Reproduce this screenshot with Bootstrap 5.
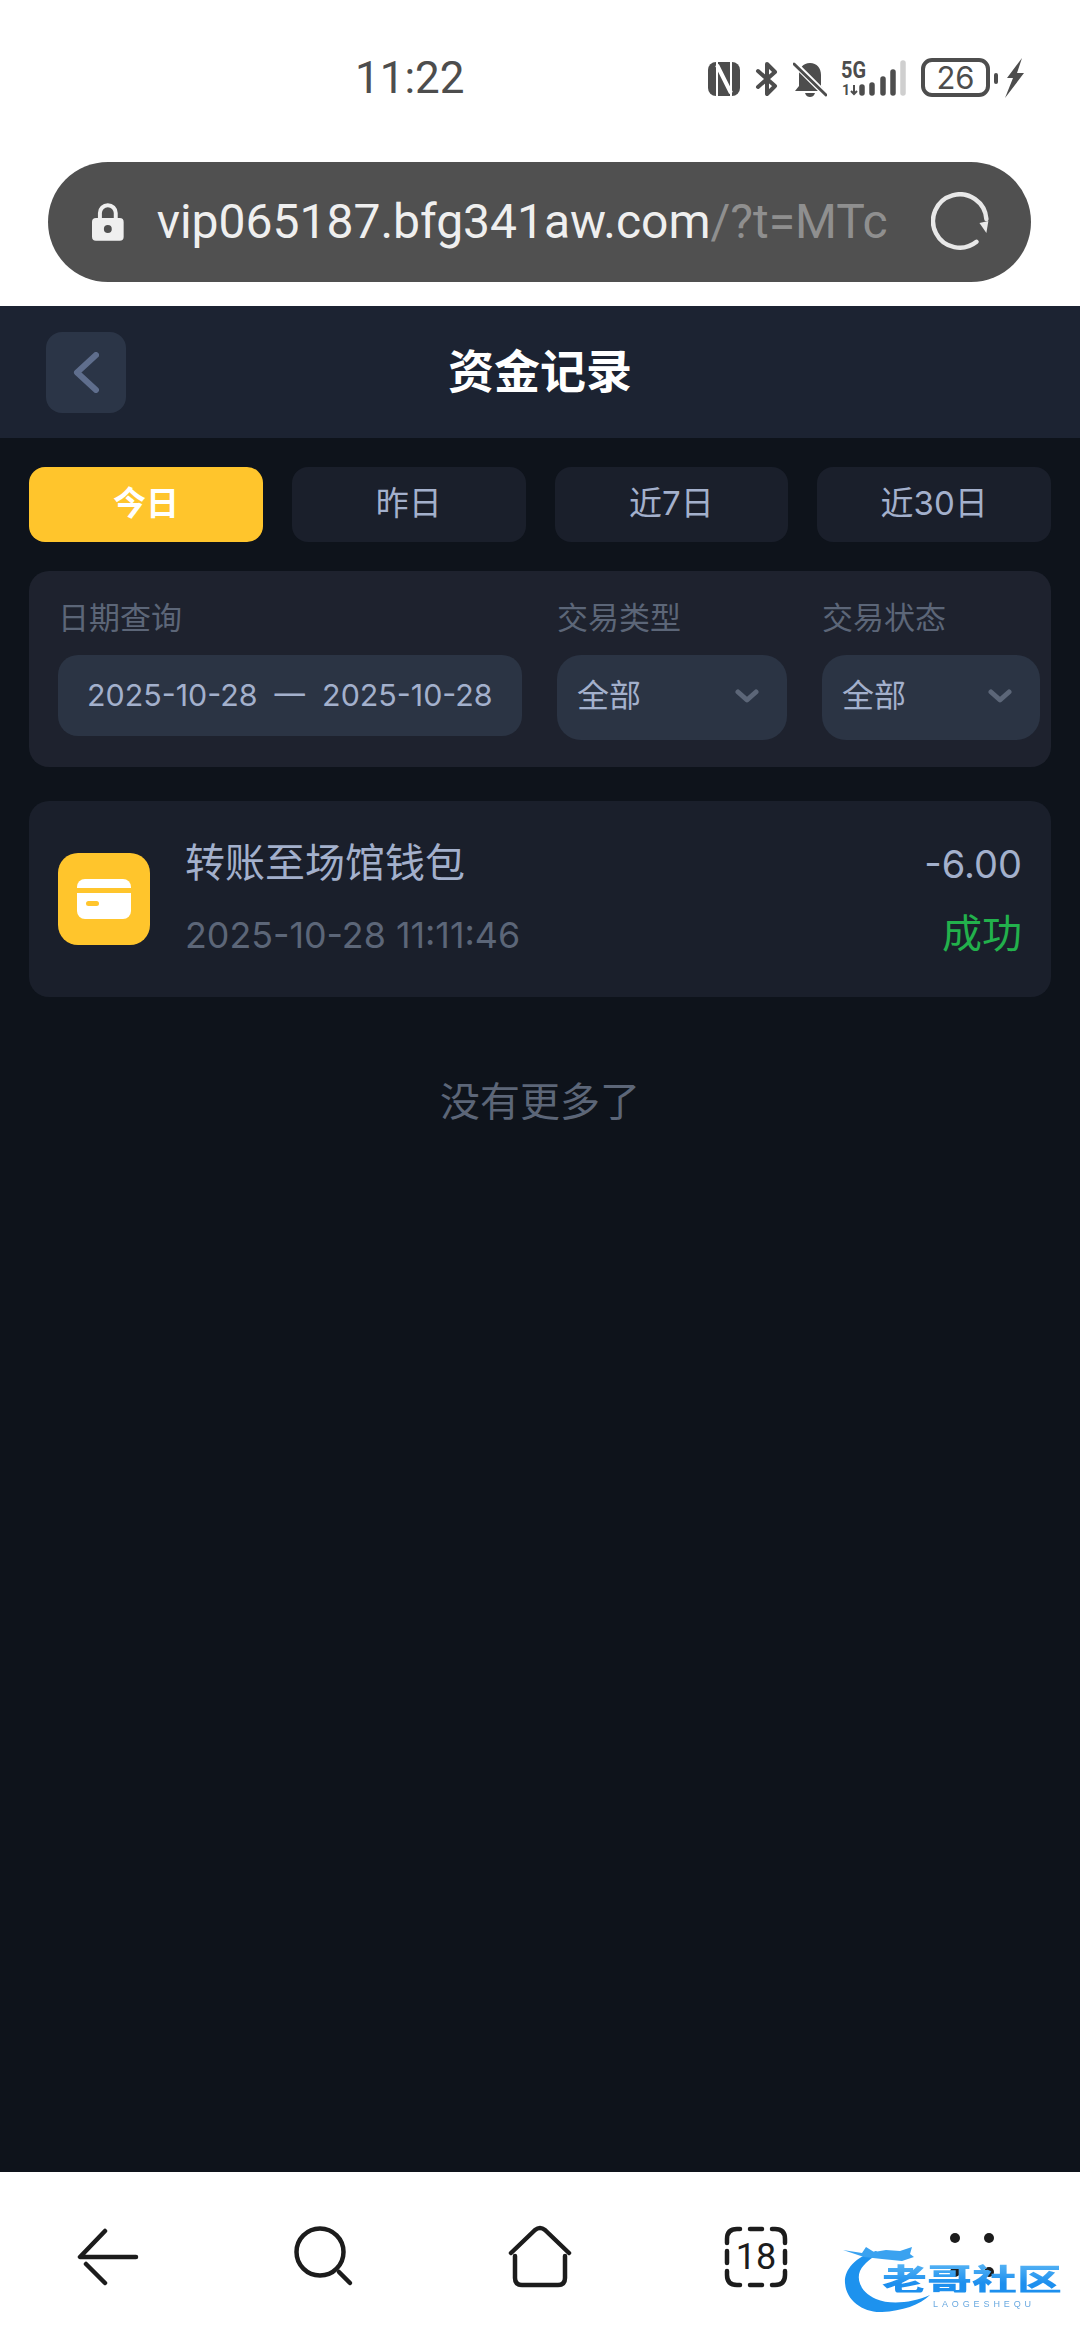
<!DOCTYPE html>
<html lang="zh">
<head>
  <meta charset="UTF-8">
  <title>资金记录</title>
  <link href="https://cdn.jsdelivr.net/npm/bootstrap@5.3.0/dist/css/bootstrap.min.css" rel="stylesheet">
  <style>
    html, body { margin: 0; height: 100%; overflow: hidden; }
    body {
      font-family: "Inter", "Noto Sans CJK SC", sans-serif;
      background-color: #fff;
      color: #a3b0cc;
      height: 100vh;
    }

    /* Phone status bar */
    .status-row { height: 162px; padding: 58px 56px 0 355px; color: #4d4d4d; flex: none; }
    .clock { font-size: 44px; line-height: 40px; width: 352px; font-family: "Roboto", sans-serif; }
    .status-batt { width: 69px; height: 39px; border: 4px solid #4d4d4d; border-radius: 11px; font-size: 31px; line-height: 31px; text-align: center; }

    /* Browser address bar */
    .addr-wrap { height: 144px; padding: 0 49px 24px 48px; flex: none; }
    .addr-bar { height: 120px; border-radius: 60px; background-color: #505050; padding: 0 41px 0 44px; }
    .addr-text { width: 731px; margin-left: 33px; margin-right: 43px; font-size: 48px; line-height: 60px; color: #efefef; white-space: nowrap; font-family: "Roboto", sans-serif; }
    .addr-text span { color: #8f8f8f; }

    /* App */
    .app-main { background-color: #0e131b; flex: 1 1 auto; min-height: 0; }
    .app-head { height: 132px; background-color: #1c2332; padding: 0 46px; position: relative; }
    .app-back { width: 80px; height: 81px; background-color: #2b3547; border-radius: 16px; }
    .app-title { color: #fff; font-size: 46px; font-weight: 700; flex: 1; text-align: center; margin: 0 80px 3px 0; line-height: 60px; }

    .range-row { padding: 29px 29px 0; gap: 29px; }
    .range-tab { flex: 1 1 0; height: 75px; border-radius: 16px; background-color: #1a1f2b; font-size: 33px; line-height: 73px; text-align: center; color: #a3b0cc; }
    .range-tab.is-on { background-color: #ffc52c; color: #fff; font-weight: 700; }

    .filter-box { margin: 29px 29px 0; height: 196px; background-color: #1e222e; border-radius: 20px; padding: 29px 11px 0 29px; gap: 35px; }
    .filter-label { font-size: 31px; line-height: 36px; color: #5c6678; margin: 0 0 19px 0; }
    .date-box { width: 464px; height: 81px; margin-top: 2px; background-color: #2b3444; border-radius: 20px; font-size: 30.400px; line-height: 81px; padding-left: 29px; white-space: nowrap; }
    .pick-box { height: 85px; background-color: #2b3444; border-radius: 24px; font-size: 32px; padding: 0 28px 3px 20px; }

    .rec-card { margin: 34px 29px 0; height: 196px; background-color: #1a1f2b; border-radius: 20px; padding: 0 29px 0 29px; }
    .rec-icon { width: 92px; height: 92px; border-radius: 20px; background-color: #ffc52c; flex: none; margin-right: 35px; }
    .rec-name { font-size: 40px; line-height: 50px; margin-bottom: 22px; }
    .rec-time { font-size: 35.800px; line-height: 50px; color: #5c6678; }
    .rec-ok { font-size: 40px; line-height: 50px; margin-top: 20px; color: #22b14c; }
    .rec-amt { font-size: 38px; line-height: 50px; }
    .no-more { font-size: 40px; line-height: 50px; color: #5c6678; text-align: center; margin-top: 80px; }

    /* Browser bottom bar */
    .tool-row { height: 168px; flex: none; position: relative; background-color: #fff; }
    .tool-ico { position: absolute; top: 50px; }
    .tab-count { position: absolute; left: 725px; top: 55px; width: 62px; height: 60px; line-height: 60px; text-align: center; font-size: 36px; color: #1c1c1c; font-family: "Roboto", sans-serif; }

    /* Watermark over the toolbar */
    .wm-mark { position: absolute; left: 842px; top: 73px; width: 222px; height: 70px; filter: blur(0.7px); }
    .wm-art { position: absolute; left: 0; top: 0; }
    .wm-name {
      position: absolute; left: 40px; top: 17px;
      font-family: "Noto Sans CJK SC", sans-serif; font-weight: 900; font-size: 45px; line-height: 45px;
      white-space: nowrap; transform: scaleY(0.68); transform-origin: top left;
      background: linear-gradient(#5ab6f5, #1d8fee 70%);
      -webkit-background-clip: text; background-clip: text; color: transparent;
    }
    .wm-sub { position: absolute; left: 91px; top: 54px; font-size: 9px; letter-spacing: 3.900px; line-height: 10px; color: #6aa9e0; white-space: nowrap; font-family: "Liberation Sans", sans-serif; }
  </style>
</head>
<body class="d-flex flex-column">
  <!-- status bar -->
  <div class="status-row d-flex align-items-start">
    <div class="clock">11:22</div>
    <div class="d-flex align-items-start">
      <svg width="34" height="36" viewBox="0 0 34 36" style="margin-top:3px;margin-right:14px"><rect x="1" y="1" width="32" height="34" rx="8" fill="#4d4d4d"/><path d="M10 1v34M24 1v34" stroke="#fff" stroke-width="2"/><path d="M10 4l14 28" stroke="#fff" stroke-width="4"/></svg>
      <svg width="24" height="38" viewBox="0 0 24 38" style="margin-top:2px;margin-right:14px"><path d="M3 11l17 15-8 8V4l8 8L3 27" fill="none" stroke="#4d4d4d" stroke-width="4" stroke-linejoin="round" stroke-linecap="round"/></svg>
      <svg width="34" height="38" viewBox="0 0 34 38" style="margin-top:2px;margin-right:13px"><path d="M17 3c7 0 11 5 11 12v11l4 5H2l4-5V15C6 8 10 3 17 3zM12 33h10c-1 3-3 4-5 4s-4-1-5-4z" fill="#4d4d4d"/><path d="M2 4l30 30" stroke="#fff" stroke-width="6"/><path d="M1 4l32 31" stroke="#4d4d4d" stroke-width="3" stroke-linecap="round"/></svg>
      <svg width="68" height="43" viewBox="0 -3 68 43" style="margin-right:13px;margin-top:-2px">
        <text x="1" y="19" font-family="Roboto, sans-serif" font-weight="700" font-size="23" textLength="25" lengthAdjust="spacingAndGlyphs" fill="#4d4d4d">5G</text>
        <text x="2" y="36" font-family="Roboto, sans-serif" font-weight="700" font-size="14" fill="#4d4d4d">1</text>
        <path d="M14 26v9m-3-3l3 3 3-3" fill="none" stroke="#4d4d4d" stroke-width="2"/>
        <g stroke-linecap="round" stroke-width="5.500" fill="none">
          <path d="M22 28v6M32 26v8M43 20v14M53 13v21" stroke="#4d4d4d"/>
          <path d="M63 4v30" stroke="#cfcfcf"/>
        </g>
      </svg>
      <div class="status-batt">26</div>
      <svg width="34" height="40" viewBox="0 0 34 40"><rect x="4" y="15" width="4" height="11" rx="2" fill="#4d4d4d"/><path d="M32 0L17 20h6l-8 20 19-25h-7z" fill="#4d4d4d"/></svg>
    </div>
  </div>

  <!-- address bar -->
  <div class="addr-wrap">
    <div class="addr-bar d-flex align-items-center">
      <svg width="32" height="38" viewBox="0 0 32 38"><path d="M8 16V10a8 8 0 0 1 16 0v6" fill="none" stroke="#efefef" stroke-width="4"/><rect y="15" width="32" height="23" rx="4" fill="#efefef"/><circle cx="16" cy="26" r="4" fill="#505050"/></svg>
      <div class="addr-text">vip065187.bfg341aw.com<span>/?t=MTc</span></div>
      <svg width="60" height="60" viewBox="0 0 60 60"><path d="M46 50A27 27 0 1 1 56 27" fill="none" stroke="#e8e8e8" stroke-width="4.500" stroke-linecap="round"/><path d="M49 31l9-2-2 12z" fill="#e8e8e8"/></svg>
    </div>
  </div>

  <!-- app -->
  <div class="app-main">
    <div class="app-head d-flex align-items-center">
      <div class="app-back d-flex align-items-center justify-content-center">
        <svg width="26" height="41" viewBox="0 0 26 41"><path d="M23 3L4 20.500 23 38" fill="none" stroke="#5f6e8d" stroke-width="6" stroke-linecap="round" stroke-linejoin="round"/></svg>
      </div>
      <div class="app-title">资金记录</div>
    </div>

    <div class="range-row d-flex">
      <div class="range-tab is-on">今日</div>
      <div class="range-tab">昨日</div>
      <div class="range-tab">近7日</div>
      <div class="range-tab">近30日</div>
    </div>

    <div class="filter-box d-flex">
      <div>
        <div class="filter-label">日期查询</div>
        <div class="date-box">2025-10-28 &nbsp;—&nbsp; 2025-10-28</div>
      </div>
      <div style="width:230px">
        <div class="filter-label">交易类型</div>
        <div class="pick-box d-flex align-items-center justify-content-between">全部
          <svg width="24" height="14" viewBox="0 0 24 14"><path d="M3 3l9 8 9-8" fill="none" stroke="#5c6678" stroke-width="5" stroke-linecap="round" stroke-linejoin="round"/></svg>
        </div>
      </div>
      <div style="width:218px">
        <div class="filter-label">交易状态</div>
        <div class="pick-box d-flex align-items-center justify-content-between">全部
          <svg width="24" height="14" viewBox="0 0 24 14"><path d="M3 3l9 8 9-8" fill="none" stroke="#5c6678" stroke-width="5" stroke-linecap="round" stroke-linejoin="round"/></svg>
        </div>
      </div>
    </div>

    <div class="rec-card d-flex align-items-center">
      <div class="rec-icon d-flex align-items-center justify-content-center">
        <svg width="54" height="40" viewBox="0 0 54 40"><rect width="54" height="40" rx="8" fill="#fff"/><rect y="9" width="54" height="5" fill="#ffc52c"/><rect x="9" y="22" width="13" height="5" rx="2.500" fill="#ffc52c"/></svg>
      </div>
      <div class="flex-grow-1">
        <div class="rec-name">转账至场馆钱包</div>
        <div class="rec-time">2025-10-28 11:11:46</div>
      </div>
      <div class="text-end">
        <div class="rec-amt">-6.00</div>
        <div class="rec-ok">成功</div>
      </div>
    </div>

    <div class="no-more">没有更多了</div>
  </div>

  <!-- bottom bar -->
  <div class="tool-row">
    <svg class="tool-ico" style="left:74px" width="68" height="64" viewBox="0 0 68 64"><path d="M31 9L6 35h56M12 42l19 19" fill="none" stroke="#1c1c1c" stroke-width="4.500" stroke-linecap="round" stroke-linejoin="round"/></svg>
    <svg class="tool-ico" style="left:290px" width="68" height="68" viewBox="0 0 68 68"><circle cx="30" cy="30" r="23.500" fill="none" stroke="#1c1c1c" stroke-width="4.500"/><path d="M49 50l11 11" stroke="#1c1c1c" stroke-width="4.500" stroke-linecap="round"/></svg>
    <svg class="tool-ico" style="left:505px" width="70" height="70" viewBox="0 0 70 70"><path d="M6 31L30 8q5-4 10 0l24 23M10 34v22q0 7 7 7h36q7 0 7-7V34" fill="none" stroke="#1c1c1c" stroke-width="4.500" stroke-linecap="round" stroke-linejoin="round"/></svg>
    <svg class="tool-ico" style="left:723px;top:53px" width="66" height="64" viewBox="0 0 66 64"><path d="M4 18v-4q0-10 10-10h3M27 4h12M49 4h3q10 0 10 10v4M62 26v12M62 46v4q0 10-10 10h-3M39 60H27M17 60h-3q-10 0-10-10v-4M4 38V26" fill="none" stroke="#1c1c1c" stroke-width="4.500" stroke-linecap="round"/></svg>
    <div class="tab-count">18</div>
    <svg class="tool-ico" style="left:945px;top:56px" width="54" height="54" viewBox="0 0 54 54"><g fill="#1c1c1c"><circle cx="10" cy="10" r="5"/><circle cx="44" cy="10" r="5"/><circle cx="10" cy="44" r="5"/><circle cx="44" cy="44" r="5"/></g></svg>
    <div class="wm-mark">
      <svg class="wm-art" width="90" height="70" viewBox="0 0 90 70"><path d="M34 6C12 12 2 26 3 38 4 56 22 68 40 67 60 66 78 60 88 50 70 58 48 60 34 54 20 48 14 36 18 26 22 18 30 12 38 9z" fill="#1d92ee"/><path d="M1 5l19 3 4-6 8 5 12-2 14 1 12-4-2 7 4 3-12 4-20-2-18-2z" fill="#3aa2f0"/></svg>
      <div class="wm-name">老哥社区</div>
      <div class="wm-sub">LAOGESHEQU</div>
    </div>
  </div>

  <script src="https://cdn.jsdelivr.net/npm/bootstrap@5.3.0/dist/js/bootstrap.bundle.min.js"></script>
</body>
</html>
